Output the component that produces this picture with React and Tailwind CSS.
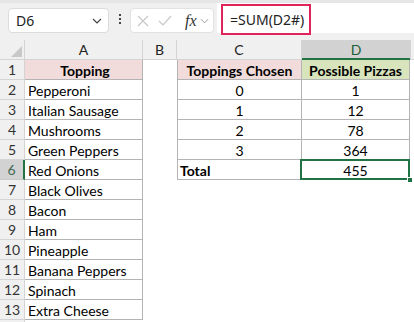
import React from 'react';

const toppings = [
  'Pepperoni', 'Italian Sausage', 'Mushrooms', 'Green Peppers', 'Red Onions', 'Black Olives',
  'Bacon', 'Ham', 'Pineapple', 'Banana Peppers', 'Spinach', 'Extra Cheese',
];

const table = [
  ['0', '1'],
  ['1', '12'],
  ['2', '78'],
  ['3', '364'],
];

const cellFont = { fontFamily: 'Lato, "Liberation Sans", sans-serif' };

const Toolbar = () => (
  <div className="h-[40px] bg-[#f0f0f0] border-t-[3px] border-[#e6e6e6] flex items-start relative" style={{ fontFamily: '"Noto Sans", sans-serif' }}>
    <div className="mt-[5px] ml-[8px] w-[101px] h-[25px] bg-white border border-[#dcdcdc] rounded-[4px] flex items-center justify-between pl-[7px] pr-[6px]">
      <span className="text-[14px] text-[#222]">D6</span>
      <svg width="10" height="6" viewBox="0 0 10 6"><path d="M1 1l4 4 4-4" fill="none" stroke="#444" strokeWidth="1.2" /></svg>
    </div>
    <div className="mt-[11px] ml-[10px] flex flex-col gap-[2px]">
      <span className="w-[2px] h-[2px] bg-[#444]" />
      <span className="w-[2px] h-[2px] bg-[#444]" />
      <span className="w-[2px] h-[2px] bg-[#444]" />
    </div>
    <div className="mt-[5px] ml-[9px] w-[84px] h-[25px] bg-white border border-[#e2e2e2] rounded-[4px] flex items-center pl-[6px] gap-[9px]">
      <svg width="12" height="12" viewBox="0 0 12 12"><path d="M1 1l10 10M11 1L1 11" stroke="#c8c8c8" strokeWidth="1.2" /></svg>
      <svg width="14" height="11" viewBox="0 0 14 11"><path d="M1 6l4 4 8-9" fill="none" stroke="#c8c8c8" strokeWidth="1.2" /></svg>
      <span className="text-[16px] italic text-[#333] leading-none ml-[4px]" style={{ fontFamily: '"Liberation Serif", serif' }}>fx</span>
      <svg width="9" height="6" viewBox="0 0 10 6" className="-ml-[6px]"><path d="M1 1l4 4 4-4" fill="none" stroke="#999" strokeWidth="1.1" /></svg>
    </div>
    <div className="flex-1 ml-[3px] h-[30px] bg-white flex items-center">
      <div className="ml-[4px] mt-[2px] w-[90px] h-[31px] border-2 border-[#e0245a] flex items-center pl-[7px]">
        <span className="text-[14px] text-[#222]">=SUM(D2#)</span>
      </div>
    </div>
  </div>
);

const ColHeader = () => (
  <div className="flex h-[20px] bg-[#f0f0f0] border-b border-[#d4d4d4] text-[14px] text-[#222]" style={cellFont}>
    <div className="w-[25px] border-r border-[#d4d4d4] flex items-end justify-end pr-[2px] pb-[2px]">
      <svg width="11" height="11" viewBox="0 0 11 11"><path d="M11 0L11 11L0 11Z" fill="#c8c8c8" /></svg>
    </div>
    <div className="w-[118px] border-r border-[#d4d4d4] flex items-center justify-center">A</div>
    <div className="w-[34px] border-r border-[#d4d4d4] flex items-center justify-center">B</div>
    <div className="w-[125px] border-r border-[#d4d4d4] flex items-center justify-center">C</div>
    <div className="w-[108px] bg-[#d2d2d2] border-b-2 border-[#217346] -mb-[1px] flex items-center justify-center text-[#1b5e38]">D</div>
    <div className="flex-1 border-l border-[#d4d4d4]" />
  </div>
);

const RowHead = ({ n, active }) => (
  <div className={`w-[25px] h-full flex items-center justify-center text-[14px] ${active ? 'bg-[#d2d2d2] text-[#3f6b52] border-r-2 border-[#217346] border-b border-b-[#c8c8c8]' : 'bg-[#f0f0f0] text-[#333] border-r border-b border-[#d4d4d4]'}`}>
    {n}
  </div>
);

const App = () => {
  const rows = [];
  for (let i = 1; i <= 14; i++) {
    const a = i === 1 ? 'Topping' : toppings[i - 2];
    let c = null;
    let d = null;
    if (i === 1) {
      c = <div className="w-[125px] h-full bg-[#f2dcdb] border-l border-r border-b border-[#b4b4b4] flex items-center justify-center font-bold pt-[1px]">Toppings Chosen</div>;
      d = <div className="w-[108px] h-full bg-[#d8e4bc] border-r border-b border-[#b4b4b4] flex items-center justify-center font-bold pt-[1px]">Possible Pizzas</div>;
    } else if (i <= 5) {
      c = <div className="w-[125px] h-full border-l border-r border-b border-[#b4b4b4] flex items-center justify-center pt-[1px]">{table[i - 2][0]}</div>;
      d = <div className="w-[108px] h-full border-r border-b border-[#b4b4b4] flex items-center justify-center pt-[1px]">{table[i - 2][1]}</div>;
    } else if (i === 6) {
      c = <div className="w-[125px] h-full border-l border-r border-b border-[#b4b4b4] flex items-center pl-[2px] font-bold pt-[1px]">Total</div>;
      d = (
        <div className="relative w-[108px] h-full border-r border-b border-[#b4b4b4] flex items-center justify-center pt-[1px]">
          455
          <div className="absolute -left-[2px] -top-[1px] -right-[1px] -bottom-[1px] border-2 border-[#217346]" />
          <div className="absolute -right-[4px] -bottom-[4px] w-[6px] h-[6px] bg-[#217346] border border-white" />
        </div>
      );
    } else {
      c = <div className="w-[125px] h-full" />;
      d = <div className="w-[108px] h-full" />;
    }
    rows.push(
      <div key={i} className="flex h-[20px] text-[14px] text-black" style={cellFont}>
        <RowHead n={i <= 13 ? i : ''} active={i === 6} />
        {i <= 13 ? (
          <div className={`w-[118px] h-full border-r border-b border-[#b4b4b4] flex items-center pl-[3px] pt-[1px] ${i === 1 ? 'bg-[#f2dcdb] justify-center font-bold' : ''}`}>{a}</div>
        ) : (
          <div className="w-[118px] h-full" />
        )}
        <div className="w-[34px] h-full" />
        {c}
        {d}
        <div className="flex-1 h-full" />
      </div>
    );
  }

  return (
    <div className="w-[414px] h-[322px] overflow-hidden bg-white">
      <Toolbar />
      <ColHeader />
      {rows}
    </div>
  );
};

export default App;
